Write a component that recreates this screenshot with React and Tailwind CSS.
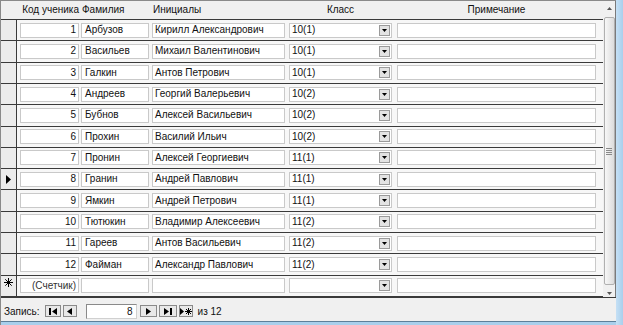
import React from "react";

const students = [
  [1, "Арбузов", "Кирилл Александрович", "10(1)"],
  [2, "Васильев", "Михаил Валентинович", "10(1)"],
  [3, "Галкин", "Антов Петрович", "10(1)"],
  [4, "Андреев", "Георгий Валерьевич", "10(2)"],
  [5, "Бубнов", "Алексей Васильевич", "10(2)"],
  [6, "Прохин", "Василий Ильич", "10(2)"],
  [7, "Пронин", "Алексей Георгиевич", "11(1)"],
  [8, "Гранин", "Андрей Павлович", "11(1)"],
  [9, "Ямкин", "Андрей Петрович", "11(1)"],
  [10, "Тютюкин", "Владимир Алексеевич", "11(2)"],
  [11, "Гареев", "Антов Васильевич", "11(2)"],
  [12, "Файман", "Александр Павлович", "11(2)"],
];

const font = { fontFamily: '"Liberation Sans", Arial, sans-serif' };

function Box({ className = "", children }) {
  return (
    <div
      className={`h-[15px] bg-white border border-[#c9c9c9] flex items-center text-[10px] leading-none text-[#111] overflow-hidden whitespace-nowrap ${className}`}
    >
      {children}
    </div>
  );
}

function DropBtn() {
  return (
    <div className="ml-auto mr-[1px] h-[11px] w-[11px] shrink-0 bg-[#e3e3e3] border border-[#9a9a9a] flex items-center justify-center">
      <svg width="5" height="3" viewBox="0 0 5 3">
        <path d="M0 0h5L2.5 3z" fill="#000" />
      </svg>
    </div>
  );
}

function Selector({ kind }) {
  return (
    <div className="w-[16px] self-stretch shrink-0 bg-[#ececec] border-r border-[#3a3a3a] flex items-center justify-center">
      {kind === "current" && (
        <svg width="5" height="9" viewBox="0 0 5 9">
          <path d="M0 0l5 4.5L0 9z" fill="#000" />
        </svg>
      )}
      {kind === "new" && (
        <svg width="9" height="9" viewBox="0 0 9 9" className="-mt-[6px]">
          <g stroke="#000" strokeWidth="1">
            <path d="M4.5 0v9M0 4.5h9M1.3 1.3l6.4 6.4M7.7 1.3l-6.4 6.4" />
          </g>
        </svg>
      )}
    </div>
  );
}

function Row({ s, kind }) {
  return (
    <div className="h-[21.4px] flex items-center border-b border-[#3a3a3a] bg-[#f7f7f7]">
      <Selector kind={kind} />
      <Box className="ml-[3px] w-[59px] justify-end pr-[2px]">
        {s ? s[0] : <span className="text-[#333]">(Счетчик)</span>}
      </Box>
      <Box className="ml-[2px] w-[68px] pl-[3px]">{s && s[1]}</Box>
      <Box className="ml-[3px] w-[133px] pl-[2px]">{s && s[2]}</Box>
      <Box className="ml-[4px] w-[103px] pl-[2px]">
        <span>{s && s[3]}</span>
        <DropBtn />
      </Box>
      <Box className="ml-[5px] w-[199px]" />
    </div>
  );
}

function NavBtn({ children, w = "w-[15px]" }) {
  return (
    <div className={`h-[12px] ${w} bg-[#e8e8e8] border border-[#8a8a8a] flex items-center justify-center`}>
      {children}
    </div>
  );
}

function Scrollbar() {
  return (
    <div className="w-[13px] shrink-0 flex flex-col items-center bg-[#f0f0f0] pt-[6px] pb-[2px] border-r border-[#7a7a7a]">
      <svg width="5" height="3" viewBox="0 0 5 3" className="mb-[7px]">
        <path d="M2.5 0L5 3H0z" fill="#555" />
      </svg>
      <div className="flex-1 w-[11px] rounded-[2px] border border-[#b0b0b0] bg-gradient-to-r from-[#f7f7f7] to-[#dcdcdc] flex items-center justify-center">
        <div className="flex flex-col gap-[1px]">
          <div className="h-px w-[6px] bg-[#8a8a8a]" />
          <div className="h-px w-[6px] bg-[#8a8a8a]" />
          <div className="h-px w-[6px] bg-[#8a8a8a]" />
          <div className="h-px w-[6px] bg-[#8a8a8a]" />
        </div>
      </div>
      <svg width="5" height="3" viewBox="0 0 5 3" className="mt-[7px]">
        <path d="M0 0h5L2.5 3z" fill="#555" />
      </svg>
    </div>
  );
}

export default function App() {
  return (
    <div className="w-[623px] h-[325px] flex overflow-hidden bg-[#f0f0f0]" style={font}>
      <div className="w-[616px] flex flex-col border-l border-t border-[#8a8a8a]">
        <div className="flex h-[296px]">
          <div className="flex-1 flex flex-col">
            {/* Header */}
            <div className="h-[19px] flex items-center border-b border-[#3a3a3a] bg-[#f0f0f0] text-[10px] text-[#111] whitespace-nowrap">
              <div className="w-[16px] self-stretch shrink-0" />
              <div className="ml-[3px] w-[59px] text-right">Код ученика</div>
              <div className="ml-[2px] w-[68px] pl-[1px]">Фамилия</div>
              <div className="ml-[3px] w-[133px] pl-[1px]">Инициалы</div>
              <div className="ml-[4px] w-[103px] text-center">Класс</div>
              <div className="ml-[5px] w-[199px] text-center">Примечание</div>
            </div>
            {students.map((s) => (
              <Row key={s[0]} s={s} kind={s[0] === 8 ? "current" : null} />
            ))}
            <Row s={null} kind="new" />
            <div className="flex-1 bg-[#f0f0f0]" />
          </div>
          <Scrollbar />
        </div>
        {/* Navigation */}
        <div className="flex-1 flex items-center gap-[2px] pl-[3px] pt-[3px] text-[10px] text-[#111] bg-[#f0f0f0] border-t border-[#3a3a3a]">
          <span className="mr-[3px]">Запись:</span>
          <NavBtn w="w-[16px]">
            <svg width="8" height="7" viewBox="0 0 8 7">
              <path d="M0 0h2v7H0zM8 0v7L3 3.5z" fill="#000" />
            </svg>
          </NavBtn>
          <NavBtn w="w-[14px]">
            <svg width="5" height="7" viewBox="0 0 5 7">
              <path d="M5 0v7L0 3.5z" fill="#000" />
            </svg>
          </NavBtn>
          <div className="ml-[7px] mr-[1px] h-[15px] w-[51px] bg-white border border-[#8a8a8a] border-r-[#d0d0d0] border-b-[#d0d0d0] flex items-center justify-end pr-[3px]">
            8
          </div>
          <NavBtn w="w-[17px]">
            <svg width="5" height="7" viewBox="0 0 5 7">
              <path d="M0 0v7l5-3.5z" fill="#000" />
            </svg>
          </NavBtn>
          <NavBtn w="w-[18px]">
            <svg width="8" height="7" viewBox="0 0 8 7">
              <path d="M0 0v7l5-3.5zM6 0h2v7H6z" fill="#000" />
            </svg>
          </NavBtn>
          <NavBtn w="w-[14px]">
            <svg width="12" height="7" viewBox="0 0 12 7">
              <path d="M0 0v7l4-3.5z" fill="#000" />
              <path d="M8.5 0v7M5 3.5h7M6 1l5 5M11 1l-5 5" stroke="#000" strokeWidth="1" />
            </svg>
          </NavBtn>
          <span className="ml-[3px]">из 12</span>
        </div>
        <div className="h-[4px] border-t border-[#5d7f9a] bg-[#a9cfec]" />
      </div>
      <div className="flex-1 bg-gradient-to-r from-[#c5e0f5] to-[#a9cfec]" />
    </div>
  );
}
